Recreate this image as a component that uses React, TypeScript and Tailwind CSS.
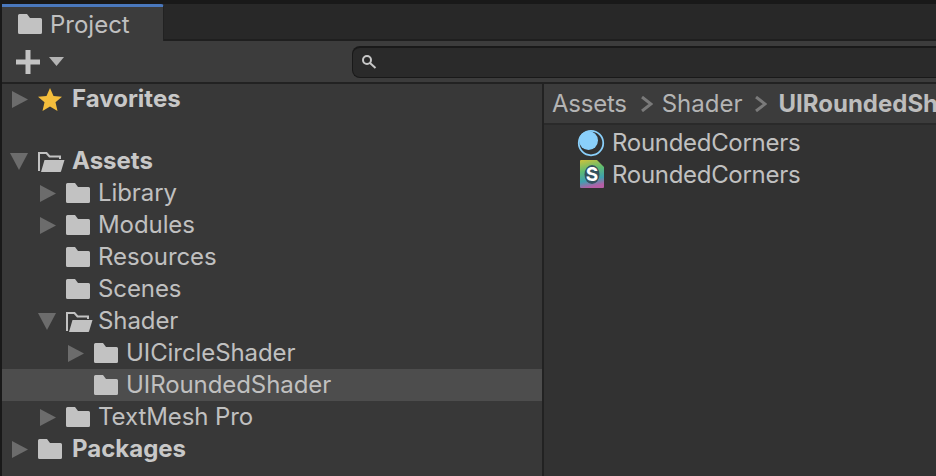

import React from "react";

const Tri = ({ open }: { open?: boolean }) =>
  open ? (
    <svg width="18" height="17" viewBox="0 0 18 17" className="-ml-[2px] shrink-0">
      <polygon points="0,0 18,0 9,17" fill="#6c6c6c" />
    </svg>
  ) : (
    <svg width="16" height="17" viewBox="0 0 16 17" className="shrink-0">
      <polygon points="0,0 16,8.500 0,17" fill="#6c6c6c" />
    </svg>
  );

const Folder = () => (
  <svg width="24" height="20" viewBox="0 0 24 20" className="shrink-0">
    <path d="M0 1.500A1.500 1.500 0 0 1 1.500 0H9L12 4h10.500A1.500 1.500 0 0 1 24 5.500V18.500A1.500 1.500 0 0 1 22.500 20H1.500A1.500 1.500 0 0 1 0 18.500Z" fill="#c2c2c2" />
  </svg>
);

const OpenFolder = () => (
  <svg width="27" height="21" viewBox="0 0 27 21" className="shrink-0">
    <path d="M1 20V2h7.500l3 3.500H22V8" fill="none" stroke="#c2c2c2" strokeWidth="2" />
    <path d="M6.500 9H26.500L23 20.500a.7.7 0 0 1-.7.500H3Z" fill="#c2c2c2" />
  </svg>
);

type RowProps = { indent: string; arrow?: "open" | "closed"; icon: React.ReactNode; label: string; bold?: boolean; selected?: boolean; gap: string };

const Row = ({ indent, arrow, icon, label, bold, selected, gap }: RowProps) => (
  <div className={`flex h-8 items-center ${indent} ${selected ? "bg-[#4d4d4d]" : ""}`}>
    <div className="flex w-[26px] shrink-0 items-center">{arrow ? <Tri open={arrow === "open"} /> : null}</div>
    {icon}
    <span className={`${gap} whitespace-nowrap text-[24px] leading-8 ${bold ? "font-bold text-[#c8c8c8]" : "tracking-[-0.08px] text-[#c0c0c0]"}`}>{label}</span>
  </div>
);

const Chevron = ({ margin }: { margin: string }) => (
  <svg width="12" height="16" viewBox="0 0 12 16" className={`${margin} shrink-0`}>
    <path d="M1 1l9 7-9 7" fill="none" stroke="#7a7a7a" strokeWidth="3" />
  </svg>
);

export default function App() {
  return (
    <div className="flex h-[476px] w-[936px] flex-col overflow-hidden bg-[#191919] pl-[2px] pt-1 font-['Inter',sans-serif]">
      <div className="flex h-[37px] shrink-0 bg-[#282828]">
        <div className="flex h-[37px] w-[162px] items-center rounded-tr-[3px] border-t-[3px] border-r border-t-[#4a78bd] border-r-[#222222] bg-[#3c3c3c] pl-4">
          <Folder />
          <span className="ml-2 mt-px text-[24px] leading-8 text-[#c0c0c0]">Project</span>
        </div>
        <div className="flex-1 border-b-2 border-[#1f1f1f]" />
      </div>
      <div className="flex h-[41px] shrink-0 items-center bg-[#3c3c3c] pl-[14px]">
        <svg width="24" height="24" viewBox="0 0 24 24" className="shrink-0">
          <path d="M9.500 0h5v9.500H24v5h-9.500V24h-5V14.500H0v-5h9.500Z" fill="#c4c4c4" />
        </svg>
        <svg width="15" height="9" viewBox="0 0 15 9" className="ml-[9px] shrink-0">
          <polygon points="0,0 15,0 7.500,9" fill="#b4b4b4" />
        </svg>
        <div className="ml-[288px] flex h-8 flex-1 items-center rounded-l-[8px] border-t-2 border-l border-b border-[#191919] bg-[#2a2a2a] pl-2">
          <svg width="16" height="16" viewBox="0 0 16 16" className="shrink-0">
            <circle cx="6" cy="6" r="4" fill="none" stroke="#c8c8c8" strokeWidth="2" />
            <path d="M9 9l5.500 5" stroke="#c8c8c8" strokeWidth="2" />
          </svg>
        </div>
      </div>
      <div className="flex min-h-0 flex-1 border-t-2 border-[#222222]">
        <div className="w-[540px] shrink-0 bg-[#383838]">
          <div className="h-[30px]">
            <div className="-mt-px">
              <Row indent="pl-[10px]" arrow="closed" label="Favorites" bold gap="ml-[10px]" icon={
                <svg width="24" height="23" viewBox="0 0 24 23" className="shrink-0">
                  <polygon points="12,0 15.500,8 24,8.700 17.500,14.300 19.500,23 12,18.400 4.500,23 6.500,14.300 0,8.700 8.500,8" fill="#f4be3c" />
                </svg>
              } />
            </div>
          </div>
          <div className="h-8" />
          <Row indent="pl-[10px]" arrow="open" label="Assets" bold gap="ml-[7px]" icon={<OpenFolder />} />
          <Row indent="pl-[38px]" arrow="closed" label="Library" gap="ml-2" icon={<Folder />} />
          <Row indent="pl-[38px]" arrow="closed" label="Modules" gap="ml-2" icon={<Folder />} />
          <Row indent="pl-[38px]" label="Resources" gap="ml-2" icon={<Folder />} />
          <Row indent="pl-[38px]" label="Scenes" gap="ml-2" icon={<Folder />} />
          <Row indent="pl-[38px]" arrow="open" label="Shader" gap="ml-[5px]" icon={<OpenFolder />} />
          <Row indent="pl-[66px]" arrow="closed" label="UICircleShader" gap="ml-2" icon={<Folder />} />
          <Row indent="pl-[66px]" label="UIRoundedShader" selected gap="ml-2" icon={<Folder />} />
          <Row indent="pl-[38px]" arrow="closed" label="TextMesh Pro" gap="ml-2" icon={<Folder />} />
          <Row indent="pl-[10px]" arrow="closed" label="Packages" bold gap="ml-[10px]" icon={<Folder />} />
        </div>
        <div className="w-[2px] shrink-0 bg-[#222222]" />
        <div className="flex min-w-0 flex-1 flex-col bg-[#323232]">
          <div className="flex h-[41px] shrink-0 items-center overflow-hidden whitespace-nowrap border-b-2 border-[#2a2a2a] bg-[#3c3c3c] pl-2 text-[24px] leading-8 text-[#b4b4b4]">
            <span className="tracking-[-0.25px]">Assets</span>
            <Chevron margin="ml-[14px] mr-[9px]" />
            <span>Shader</span>
            <Chevron margin="ml-[13px] mr-[11px]" />
            <span className="font-bold text-[#bdbdbd]">UIRoundedShader</span>
          </div>
          <div className="flex flex-col pl-[33px] pt-[2px] text-[24px] leading-8 tracking-[-0.3px] text-[#c0c0c0]">
            <div className="flex h-8 items-center">
              <svg width="28" height="28" viewBox="0 0 28 28" className="shrink-0">
                <circle cx="14" cy="14" r="12.250" fill="none" stroke="#8ad0fb" strokeWidth="1.750" />
                <circle cx="11.500" cy="11.500" r="9.500" fill="#8ad0fb" />
              </svg>
              <span className="ml-[7px]">RoundedCorners</span>
            </div>
            <div className="flex h-8 items-center">
              <svg width="28" height="28" viewBox="0 0 28 28" className="-mt-[2px] shrink-0">
                <defs>
                  <linearGradient id="shaderGrad" x1="0.1" y1="0" x2="0.3" y2="1">
                    <stop offset="0" stopColor="#c9c23d" />
                    <stop offset="0.4" stopColor="#5dbb72" />
                    <stop offset="0.75" stopColor="#3f9fb0" />
                    <stop offset="1" stopColor="#b55ea5" />
                  </linearGradient>
                </defs>
                <path d="M3 1a1 1 0 0 1 1-1h16l7 7v20a1 1 0 0 1-1 1H4a1 1 0 0 1-1-1Z" fill="url(#shaderGrad)" />
                <ellipse cx="15" cy="14.500" rx="7.500" ry="9.500" fill="#34525f" />
                <text x="15" y="21" textAnchor="middle" fontFamily="Inter, sans-serif" fontWeight="700" fontSize="19" letterSpacing="0" fill="#ffffff">S</text>
              </svg>
              <span className="ml-[7px]">RoundedCorners</span>
            </div>
          </div>
        </div>
      </div>
    </div>
  );
}
